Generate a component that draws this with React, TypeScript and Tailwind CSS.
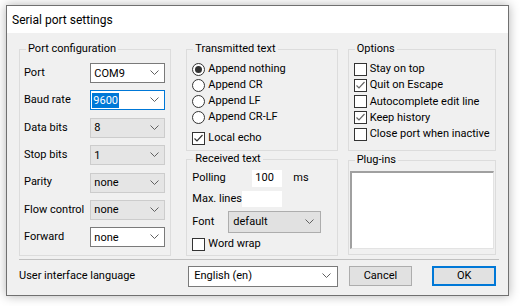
import React from 'react';

const font = "font-['Roboto','Segoe_UI',sans-serif]";

const Chevron = ({ color = '#606060' }: { color?: string }) => (
  <svg width="9" height="6" viewBox="0 0 9 6" className="shrink-0">
    <path d="M0.5 0.5 L4.5 4.5 L8.5 0.5" fill="none" stroke={color} strokeWidth="1" />
  </svg>
);

function Combo({
  value,
  width,
  disabled = false,
  focused = false,
  height = 20,
}: {
  value: string;
  width: number;
  disabled?: boolean;
  focused?: boolean;
  height?: number;
}) {
  const box = disabled
    ? 'bg-[#e5e5e5] border-[#cccccc]'
    : focused
    ? 'bg-white border-[#0078d7]'
    : 'bg-white border-[#7a7a7a]';
  return (
    <div
      className={`flex items-center justify-between border pr-[5px] ${box}`}
      style={{ width, height }}
    >
      {focused ? (
        <span className="ml-[1px] bg-[#0078d7] px-[1px] leading-[15px] text-white">{value}</span>
      ) : (
        <span className="ml-[3px] leading-[15px] text-black">{value}</span>
      )}
      <Chevron />
    </div>
  );
}

function Radio({ checked, label }: { checked?: boolean; label: string }) {
  return (
    <div className="flex h-[16px] items-center gap-[3px]">
      <div className="flex h-[13px] w-[13px] items-center justify-center rounded-full border border-[#333333] bg-white">
        {checked && <div className="h-[7px] w-[7px] rounded-full bg-[#333333]" />}
      </div>
      <span className="leading-[16px]">{label}</span>
    </div>
  );
}

function Check({ checked, label, tick = '#333333' }: { checked?: boolean; label: string; tick?: string }) {
  return (
    <div className="flex h-[16px] items-center gap-[3px]">
      <div className="flex h-[13px] w-[13px] shrink-0 items-center justify-center border border-[#333333] bg-white">
        {checked && (
          <svg width="11" height="11" viewBox="0 0 11 11">
            <path d="M1.5 5.5 L4 8 L9.5 2" fill="none" stroke={tick} strokeWidth="1.2" />
          </svg>
        )}
      </div>
      <span className="whitespace-nowrap leading-[16px]">{label}</span>
    </div>
  );
}

function Group({
  title,
  className = '',
  children,
}: {
  title: string;
  className?: string;
  children?: React.ReactNode;
}) {
  return (
    <fieldset className={`border border-[#dcdcdc] ${className}`}>
      <legend className="ml-[6px] px-[2px] leading-[16px]">{title}</legend>
      {children}
    </fieldset>
  );
}

const portRows: { label: string; value: string; disabled?: boolean; focused?: boolean }[] = [
  { label: 'Port', value: 'COM9' },
  { label: 'Baud rate', value: '9600', focused: true },
  { label: 'Data bits', value: '8', disabled: true },
  { label: 'Stop bits', value: '1', disabled: true },
  { label: 'Parity', value: 'none', disabled: true },
  { label: 'Flow control', value: 'none', disabled: true },
  { label: 'Forward', value: 'none' },
];

export default function App() {
  return (
    <div className={`h-[306px] w-[520px] bg-white pl-[6px] pt-[5px] text-[11px] text-black ${font}`}>
      <div className="flex h-[291px] w-[503px] flex-col border border-[#707070] bg-[#f0f0f0] shadow-[0_0_10px_rgba(0,0,0,0.3)]">
        {/* title bar */}
        <div className="flex h-[27px] items-center bg-white pl-[5px] text-[12px]">Serial port settings</div>

        {/* body */}
        <div className="flex flex-col px-[12px] pt-[8px]">
          <div className="flex">
            <Group title="Port configuration" className="h-[215px] w-[153px]">
              <div className="flex flex-col gap-[7.4px] pl-[4px] pt-[6px]">
                {portRows.map((r) => (
                  <div key={r.label} className="flex h-[20px] items-center justify-between pr-[5px]">
                    <span className="whitespace-nowrap">{r.label}</span>
                    <Combo value={r.value} width={75} disabled={r.disabled} focused={r.focused} />
                  </div>
                ))}
              </div>
            </Group>

            <div className="ml-[15px] flex w-[152px] flex-col">
              <Group title="Transmitted text" className="h-[110px]">
                <div className="flex flex-col pl-[5px] pt-[4px]">
                  <Radio checked label="Append nothing" />
                  <Radio label="Append CR" />
                  <Radio label="Append LF" />
                  <Radio label="Append CR-LF" />
                  <div className="mt-[5px]">
                    <Check checked label="Local echo" />
                  </div>
                </div>
              </Group>
              <Group title="Received text" className="h-[105px]">
                <div className="flex flex-col pl-[5px] pt-[3px]">
                  <div className="flex h-[17px] items-center">
                    <span className="w-[60px]">Polling</span>
                    <div className="flex h-[17px] w-[30px] items-center bg-white pl-[3px]">100</div>
                    <span className="ml-[11px]">ms</span>
                  </div>
                  <div className="mt-[4px] flex h-[16px] items-center">
                    <span className="w-[50px] whitespace-nowrap">Max. lines</span>
                    <div className="h-[16px] w-[40px] bg-white" />
                  </div>
                  <div className="mt-[4px] flex h-[22px] items-center">
                    <span className="w-[36px]">Font</span>
                    <div className="flex h-[22px] w-[93px] items-center justify-between border border-[#adadad] bg-[#e1e1e1] pl-[4px] pr-[6px]">
                      <span>default</span>
                      <Chevron />
                    </div>
                  </div>
                  <div className="mt-[3px]">
                    <Check label="Word wrap" />
                  </div>
                </div>
              </Group>
            </div>

            <div className="ml-[10px] flex w-[149px] flex-col">
              <Group title="Options" className="h-[110px]">
                <div className="flex flex-col gap-[0.3px] pl-[5px] pt-[4px]">
                  <Check label="Stay on top" />
                  <Check checked tick="#666666" label="Quit on Escape" />
                  <Check label="Autocomplete edit line" />
                  <Check checked tick="#666666" label="Keep history" />
                  <Check label="Close port when inactive" />
                </div>
              </Group>
              <Group title="Plug-ins" className="mt-[1px] h-[103px]">
                <div className="mx-[1px] mt-[3px] h-[78px] border-l-2 border-t-2 border-b border-r border-l-[#a0a0a0] border-t-[#a0a0a0] border-b-[#e3e3e3] border-r-[#e3e3e3] bg-white" />
              </Group>
            </div>
          </div>

          {/* separator */}
          <div className="mr-[-3px] mt-[3px] h-px bg-[#c0c0c0]" />

          {/* bottom row */}
          <div className="mt-[5px] flex h-[22px] items-center">
            <span className="w-[170px]">User interface language</span>
            <div className="flex h-[21px] w-[150px] items-center justify-between border border-[#7a7a7a] bg-white pl-[5px] pr-[6px]">
              <span>English (en)</span>
              <Chevron />
            </div>
            <button className="ml-[11px] flex h-[20px] w-[64px] items-center justify-center border border-[#adadad] bg-[#e1e1e1]">
              Cancel
            </button>
            <button className="ml-[20px] flex h-[20px] w-[64px] items-center justify-center border-2 border-[#0078d7] bg-[#e1e1e1]">
              OK
            </button>
          </div>
        </div>
      </div>
    </div>
  );
}
